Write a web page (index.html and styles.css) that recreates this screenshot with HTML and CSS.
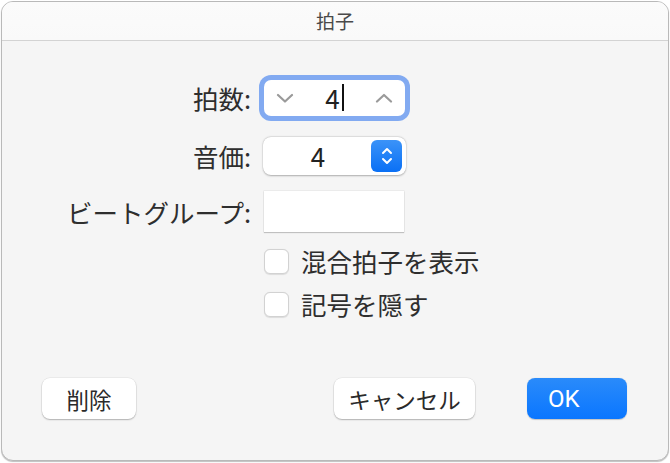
FILE: index.html
```html
<!DOCTYPE html>
<html lang="ja">
<head>
<meta charset="utf-8">
<link rel="stylesheet" href="styles.css">
</head>
<body>
<div class="window">
  <div class="titlebar">拍子</div>
  <div class="content">
    <div class="row row-1">
      <div class="label">拍数:</div>
      <div class="stepper focused">
        <svg class="chev" width="18" height="10" viewBox="0 0 18 10"><path d="M2 2 L9 8.5 L16 2" fill="none" stroke="#9a9a9a" stroke-width="2.2" stroke-linecap="round" stroke-linejoin="round"/></svg>
        <span class="num">4<span class="caret"></span></span>
        <svg class="chev" width="18" height="10" viewBox="0 0 18 10"><path d="M2 8.5 L9 2 L16 8.5" fill="none" stroke="#9a9a9a" stroke-width="2.2" stroke-linecap="round" stroke-linejoin="round"/></svg>
      </div>
    </div>
    <div class="row row-2">
      <div class="label">音価:</div>
      <div class="popup">
        <span class="num">4</span>
        <span class="updown">
          <svg width="14" height="24" viewBox="0 0 14 24"><path d="M3 9 L7 5 L11 9 M3 15 L7 19 L11 15" fill="none" stroke="#fff" stroke-width="2" stroke-linecap="round" stroke-linejoin="round"/></svg>
        </span>
      </div>
    </div>
    <div class="row row-3">
      <div class="label">ビートグループ:</div>
      <div class="textfield"></div>
    </div>
    <div class="row row-4">
      <div class="label"></div>
      <label class="check"><span class="box"></span>混合拍子を表示</label>
    </div>
    <div class="row row-5">
      <div class="label"></div>
      <label class="check"><span class="box"></span>記号を隠す</label>
    </div>
    <div class="buttons">
      <button class="btn btn-delete">削除</button>
      <div class="spacer"></div>
      <button class="btn btn-cancel">キャンセル</button>
      <button class="btn btn-ok">OK</button>
    </div>
  </div>
</div>
</body>
</html>
```
FILE: styles.css
```css
* { box-sizing: border-box; }
html, body { margin: 0; padding: 0; background: #ffffff; }
body {
  font-family: "Noto Sans CJK JP", "Noto Sans", sans-serif;
  color: #2a2a2a;
  width: 670px;
  height: 463px;
  padding: 1px 1px 2px 1px;
}
.window {
  width: 668px;
  height: 460px;
  border: 1px solid #b9b9b9;
  border-radius: 12px;
  background: #f5f5f5;
  overflow: hidden;
  box-shadow: 0 1px 1px rgba(0,0,0,0.25);
}
.titlebar {
  height: 39px;
  background: linear-gradient(#fbfbfb, #f9f9f9);
  border-bottom: 1px solid #d3d3d3;
  text-align: center;
  font-size: 19px;
  line-height: 38px;
  color: #4a4a4a;
}
.content {
  padding-top: 39px;
  display: flex;
  flex-direction: column;
}
.row {
  display: flex;
  align-items: center;
}
.label {
  width: 262px;
  padding-right: 13px;
  text-align: right;
  font-size: 25.5px;
  line-height: 32px;
  color: #2e2e2e;
  flex: none;
}
.row-1 { height: 36px; }
.row-2 { height: 38px; margin-top: 21px; }
.row-3 { height: 41px; margin-top: 16px; }
.row-4 { height: 26px; margin-top: 16px; }
.row-5 { height: 26px; margin-top: 17px; }

.stepper {
  width: 141px;
  height: 36px;
  background: #fff;
  border-radius: 7px;
  box-shadow: 0 0 0 5px #82aaf1;
  display: flex;
  align-items: center;
  padding: 0 12px 0 12px;
  justify-content: space-between;
}
.num {
  font-size: 26px;
  line-height: 30px;
  color: #222;
  position: relative;
}
.stepper .num { margin-left: 11px; margin-right: 15px; }
.caret {
  position: absolute;
  right: -4px;
  top: 1px;
  width: 2px;
  height: 27px;
  background: #111;
}
.popup {
  margin-left: -1px;
  width: 143px;
  height: 38px;
  background: #fff;
  border-radius: 8px;
  box-shadow: 0 0.5px 2px rgba(0,0,0,0.28), 0 0 0 0.5px rgba(0,0,0,0.06);
  display: flex;
  align-items: center;
  padding: 0 4px 0 0;
}
.popup .num { flex: 1; text-align: center; padding-left: 2px; }
.updown {
  width: 31px;
  height: 32px;
  border-radius: 6px;
  background: linear-gradient(#3b93f8, #0a70f5);
  display: flex;
  align-items: center;
  justify-content: center;
}
.textfield {
  width: 140px;
  height: 41px;
  background: #fff;
  box-shadow: 0 1px 1px rgba(0,0,0,0.18), 0 0 0 0.5px rgba(0,0,0,0.08);
}
.check {
  display: flex;
  align-items: center;
  font-size: 25.5px;
  line-height: 32px;
  color: #2e2e2e;
}
.box {
  width: 25px;
  height: 25px;
  border-radius: 6px;
  background: #fff;
  border: 1px solid #d2d2d2;
  box-shadow: 0 0.5px 1px rgba(0,0,0,0.1);
  margin-right: 12px;
}
.buttons {
  display: flex;
  align-items: center;
  margin-top: 61px;
  padding: 0 41px 0 40px;
}
.spacer { flex: 1; }
.btn {
  font-family: "Noto Sans CJK JP", "Noto Sans", sans-serif;
  height: 41px;
  border: none;
  border-radius: 8px;
  background: #fff;
  font-size: 22.5px;
  color: #2a2a2a;
  box-shadow: 0 1px 1.5px rgba(0,0,0,0.25), 0 0 0 0.5px rgba(0,0,0,0.08);
  padding: 0;
}
.btn-delete { width: 94px; }
.btn-cancel { width: 141px; margin-right: 52px; }
.btn-ok {
  width: 100px;
  background: linear-gradient(#2a8bfa, #0a76ff);
  color: #fff;
  font-family: "Roboto", "Noto Sans", sans-serif;
  font-size: 24px;
  box-shadow: 0 0.5px 1px rgba(0,0,0,0.2);
  text-align: left;
  padding-left: 21px;
}
```
